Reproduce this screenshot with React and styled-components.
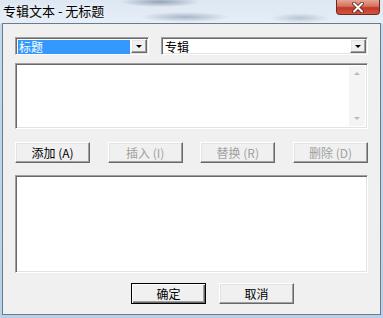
import React from "react";
import styled, { createGlobalStyle, css } from "styled-components";

const GlobalStyle = createGlobalStyle`
  html, body {
    margin: 0;
    padding: 0;
  }
  body {
    width: 383px;
    height: 318px;
    overflow: hidden;
    font-family: "Noto Sans CJK SC", "Noto Sans", sans-serif;
  }
`;

const Window = styled.div`
  width: 383px;
  height: 318px;
  display: flex;
  flex-direction: column;
  box-sizing: border-box;
  background:
    radial-gradient(ellipse 40px 5px at 160px 2px, rgba(60, 80, 110, 0.45), transparent),
    radial-gradient(ellipse 45px 5px at 185px 17px, rgba(60, 80, 110, 0.35), transparent),
    radial-gradient(ellipse 30px 5px at 300px 18px, rgba(60, 80, 110, 0.25), transparent),
    linear-gradient(180deg, #dde7f2 0px, #e6eef7 23px, #c4d8ee 24px, #b9d0ea 100%);
`;

const TitleBar = styled.div`
  height: 23px;
  display: flex;
  align-items: flex-start;
  padding-left: 3px;
`;

const Title = styled.span`
  font-size: 13px;
  line-height: 21px;
  color: #000;
  text-shadow: 0 0 6px rgba(255, 255, 255, 0.9);
`;

const CloseButton = styled.div`
  margin-left: auto;
  margin-right: 3px;
  width: 44px;
  height: 15px;
  box-sizing: border-box;
  border: 1px solid #6e2a22;
  border-top: none;
  border-radius: 0 0 4px 4px;
  background: linear-gradient(180deg, #e5a596 0%, #d6705c 45%, #c0392a 55%, #d2553e 100%);
  display: flex;
  align-items: center;
  justify-content: center;
`;

const Client = styled.div`
  flex: 1;
  margin: 0 2px 3px 2px;
  border: 1px solid #6b7b8e;
  background: #f0f0f0;
  padding: 13px 0 0 12px;
  display: flex;
  flex-direction: column;
`;

const Content = styled.div`
  width: 353px;
  display: flex;
  flex-direction: column;
`;

const sunken = css`
  box-sizing: border-box;
  border: 1px solid;
  border-color: #a0a0a0 #ffffff #ffffff #a0a0a0;
  box-shadow: inset 1px 1px #696969, inset -1px -1px #e3e3e3;
  background: #fff;
`;

const raised = css`
  box-sizing: border-box;
  border: 1px solid;
  border-color: #ffffff #696969 #696969 #ffffff;
  box-shadow: inset -1px -1px #a0a0a0, inset 1px 1px #e3e3e3;
  background: #f0f0f0;
`;

const ComboRow = styled.div`
  display: flex;
  justify-content: space-between;
`;

const Combo = styled.div`
  ${sunken};
  width: ${(p) => p.$width}px;
  height: 18px;
  padding: 1px;
  display: flex;
  align-items: stretch;
`;

const ComboText = styled.div`
  flex: 1;
  height: 14px;
  margin: 1px 1px 0 1px;
  display: flex;
  align-items: center;
  font-size: 12px;
  line-height: 12px;
  padding-left: 1px;
  color: ${(p) => (p.$selected ? "#fff" : "#000")};
  background: ${(p) => (p.$selected ? "#3399ff" : "transparent")};
`;

const DropButton = styled.div`
  ${raised};
  width: 16px;
  display: flex;
  align-items: center;
  justify-content: center;
`;

const Arrow = styled.span`
  width: 0;
  height: 0;
  border-left: 3px solid transparent;
  border-right: 3px solid transparent;
  border-top: 3px solid ${(p) => p.$color || "#000"};
  ${(p) =>
    p.$up &&
    css`
      border-top: none;
      border-bottom: 3px solid ${p.$color};
    `}
`;

const TextBox = styled.div`
  ${sunken};
  height: ${(p) => p.$height}px;
  margin-top: ${(p) => p.$top}px;
  display: flex;
  justify-content: flex-end;
  padding: 2px;
`;

const ScrollBar = styled.div`
  width: 16px;
  background: #f4f4f4;
  display: flex;
  flex-direction: column;
  justify-content: space-between;
  align-items: center;
  padding: 6px 0;
`;

const ButtonRow = styled.div`
  display: flex;
  justify-content: space-between;
  margin-top: ${(p) => p.$top}px;
  padding-left: ${(p) => p.$indent || 0}px;
  gap: 13px;
  ${(p) =>
    p.$indent &&
    css`
      justify-content: flex-start;
    `}
`;

const Button = styled.button`
  ${raised};
  width: 75px;
  height: 21px;
  padding: 0;
  font-family: "Noto Sans CJK SC", "Noto Sans", sans-serif;
  font-size: 12px;
  line-height: 17px;
  color: ${(p) => (p.disabled ? "#a0a0a0" : "#000")};
  ${(p) =>
    p.$default &&
    css`
      border: 1px solid #000;
      box-shadow: inset 1px 1px #fff, inset -1px -1px #696969, inset -2px -2px #a0a0a0;
    `}
`;

export default function App() {
  return (
    <>
      <GlobalStyle />
      <Window>
        <TitleBar>
          <Title>专辑文本 - 无标题</Title>
          <CloseButton>
            <svg width="14" height="11" viewBox="0 0 14 11">
              <path
                d="M3 1.5 L11 9.5 M11 1.5 L3 9.5"
                stroke="#5a2018"
                strokeWidth="3.6"
                strokeLinecap="round"
              />
              <path
                d="M3 1.5 L11 9.5 M11 1.5 L3 9.5"
                stroke="#ffffff"
                strokeWidth="2"
                strokeLinecap="round"
              />
            </svg>
          </CloseButton>
        </TitleBar>
        <Client>
          <Content>
            <ComboRow>
              <Combo $width={134}>
                <ComboText $selected>标题</ComboText>
                <DropButton>
                  <Arrow />
                </DropButton>
              </Combo>
              <Combo $width={207}>
                <ComboText>专辑</ComboText>
                <DropButton>
                  <Arrow />
                </DropButton>
              </Combo>
            </ComboRow>
            <TextBox $height={66} $top={8}>
              <ScrollBar>
                <Arrow $up $color="#b8b8b8" />
                <Arrow $color="#b8b8b8" />
              </ScrollBar>
            </TextBox>
            <ButtonRow $top={13}>
              <Button>添加 (A)</Button>
              <Button disabled>插入 (I)</Button>
              <Button disabled>替换 (R)</Button>
              <Button disabled>删除 (D)</Button>
            </ButtonRow>
            <TextBox $height={98} $top={12} />
            <ButtonRow $top={10} $indent={116}>
              <Button $default>确定</Button>
              <Button>取消</Button>
            </ButtonRow>
          </Content>
        </Client>
      </Window>
    </>
  );
}
